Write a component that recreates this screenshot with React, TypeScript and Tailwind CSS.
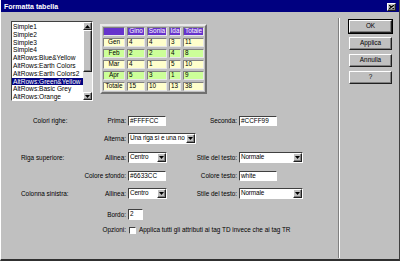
import React from 'react';

// Win95 style bevels
const raised = 'border border-t-white border-l-white border-r-[#202020] border-b-[#202020] shadow-[inset_-1px_-1px_0_#808080]';
const sunken = 'border border-t-[#404040] border-l-[#404040] border-r-white border-b-white';

const presets = [
  'Simple1',
  'Simple2',
  'Simple3',
  'Simple4',
  'AltRows:Blue&Yellow',
  'AltRows:Earth Colors',
  'AltRows:Earth Colors2',
  'AltRows:Green&Yellow',
  'AltRows:Basic Grey',
  'AltRows:Orange',
];

const rows = [
  { name: 'Gen', values: [4, 4, 3, 11], bg: 'bg-[#ffffcc]' },
  { name: 'Feb', values: [2, 2, 4, 8], bg: 'bg-[#ccff99]' },
  { name: 'Mar', values: [4, 1, 5, 10], bg: 'bg-[#ffffcc]' },
  { name: 'Apr', values: [5, 3, 1, 9], bg: 'bg-[#ccff99]' },
  { name: 'Totale', values: [15, 10, 13, 38], bg: 'bg-[#ffffcc]' },
];

const cellBorder = 'border border-t-[#808080] border-l-[#808080] border-r-[#e8e8e8] border-b-[#e8e8e8]';

const Arrow = ({ dir }: { dir: 'up' | 'down' }) => (
  <svg width="5" height="3" viewBox="0 0 5 3">
    {dir === 'up' ? <polygon points="2.5,0 5,3 0,3" fill="#000" /> : <polygon points="0,0 5,0 2.5,3" fill="#000" />}
  </svg>
);

const TextField = ({ value, width }: { value: string; width: string }) => (
  <div className={`${sunken} ${width} h-[10px] bg-white flex items-center pl-[1px] leading-none`}>{value}</div>
);

const Select = ({ value, width }: { value: string; width: string }) => (
  <div className={`${sunken} ${width} h-[11px] bg-white flex items-center leading-none`}>
    <span className="flex-1 pl-[1px] overflow-hidden whitespace-nowrap tracking-[-0.15px]">{value}</span>
    <div className={`${raised} w-[9px] h-[9px] shrink-0 bg-[#c0c0c0] flex items-center justify-center`}>
      <Arrow dir="down" />
    </div>
  </div>
);

const Button = ({ label, isDefault }: { label: string; isDefault?: boolean }) => (
  <div className={isDefault ? 'border border-black' : 'border border-transparent'}>
    <div className={`${raised} h-[13px] flex items-center justify-center leading-none`}>{label}</div>
  </div>
);

// one form row: [group label ... right label] [control] [right label] [control]
const FormRow = ({
  group,
  groupPad = 'pl-[20px]',
  label,
  control,
  label2,
  control2,
  className,
}: {
  group?: string;
  groupPad?: string;
  label: string;
  control: React.ReactNode;
  label2?: string;
  control2?: React.ReactNode;
  className: string;
}) => (
  <div className={`flex items-center ${className}`}>
    <div className={`w-[127px] flex justify-between items-center ${groupPad} pr-[2px] whitespace-nowrap`}>
      <span>{group}</span>
      <span>{label}</span>
    </div>
    <div className="w-[63px] flex">{control}</div>
    {label2 && <div className="w-[48px] text-right pr-[2px] whitespace-nowrap">{label2}</div>}
    {control2}
  </div>
);

export default function App() {
  return (
    <div className="w-[400px] h-[261px] bg-[#c0c0c0] flex flex-col font-['Liberation_Sans',Arial,sans-serif] text-[6.4px] text-black overflow-hidden border-l border-l-white border-r border-r-[#404040] border-b-2 border-b-[#303030]">
      {/* title bar */}
      <div className="h-[12px] bg-[#000080] flex items-center justify-between pl-[3px] pr-[3px] shrink-0">
        <span className="text-white font-bold text-[7px] leading-none">Formatta tabella</span>
        <div className={`${raised} w-[9px] h-[8px] bg-[#c0c0c0] flex items-center justify-center mt-[2px]`}>
          <svg width="5" height="4" viewBox="0 0 5 4">
            <path d="M0 0 L5 4 M5 0 L0 4" stroke="#000" strokeWidth="1.2" />
          </svg>
        </div>
      </div>

      <div className="flex flex-1">
        {/* left pane */}
        <div className="w-[337px] flex flex-col">
          <div className="flex items-start pt-[9px] pl-[10px]">
            {/* preset list */}
            <div className={`${sunken} w-[82px] h-[80px] bg-white flex`}>
              <div className="flex-1 flex flex-col pt-[1px] text-[6.6px]">
                {presets.map((p) => (
                  <div
                    key={p}
                    className={`h-[7.8px] leading-[7.8px] pl-[1px] whitespace-nowrap ${p === 'AltRows:Green&Yellow' ? 'bg-[#000080] text-white' : ''}`}
                  >
                    {p}
                  </div>
                ))}
              </div>
              <div className="w-[9px] flex flex-col bg-[#dcdcdc]">
                <div className={`${raised} h-[8px] bg-[#c0c0c0] flex items-center justify-center`}>
                  <Arrow dir="up" />
                </div>
                <div className={`${raised} h-[42px] bg-[#c0c0c0]`} />
                <div className="flex-1" />
                <div className={`${raised} h-[8px] bg-[#c0c0c0] flex items-center justify-center`}>
                  <Arrow dir="down" />
                </div>
              </div>
            </div>

            {/* preview table */}
            <div className="ml-[7px] mt-[3px] border-2 border-t-[#e8e8e8] border-l-[#e8e8e8] border-r-[#707070] border-b-[#707070] p-px">
              <div className="grid grid-cols-[22px_18px_20px_12px_21px] gap-x-[2px] gap-y-[2px]">
                <div className={`${cellBorder} h-[9px] bg-[#6633cc]`} />
                {['Gino', 'Sonia', 'Ida', 'Totale'].map((h) => (
                  <div key={h} className={`${cellBorder} h-[9px] bg-[#6633cc] text-white leading-none flex items-center justify-center`}>
                    {h}
                  </div>
                ))}
                {rows.map((r) => (
                  <React.Fragment key={r.name}>
                    <div className={`${cellBorder} h-[9px] ${r.bg} leading-none flex items-center justify-center`}>{r.name}</div>
                    {r.values.map((v, i) => (
                      <div key={i} className={`${cellBorder} h-[9px] ${r.bg} leading-none flex items-center pl-[1px]`}>
                        {v}
                      </div>
                    ))}
                  </React.Fragment>
                ))}
              </div>
            </div>
          </div>

          {/* form */}
          <FormRow
            className="mt-[15px] h-[10px]"
            group="Colori righe:"
            groupPad="pl-[32px]"
            label="Prima:"
            control={<TextField value="#FFFFCC" width="w-[38px]" />}
            label2="Seconda:"
            control2={<TextField value="#CCFF99" width="w-[38px]" />}
          />
          <FormRow
            className="mt-[7px] h-[11px]"
            label="Alterna:"
            control={<div className="w-[68px] shrink-0"><Select value="Una riga sì e una no" width="w-[68px]" /></div>}
          />
          <FormRow
            className="mt-[8px] h-[11px]"
            group="Riga superiore:"
            label="Allinea:"
            control={<Select value="Centro" width="w-[39px]" />}
            label2="Stile del testo:"
            control2={<Select value="Normale" width="w-[64px]" />}
          />
          <FormRow
            className="mt-[8px] h-[10px]"
            label="Colore sfondo:"
            control={<TextField value="#6633CC" width="w-[38px]" />}
            label2="Colore testo:"
            control2={<TextField value="white" width="w-[38px]" />}
          />
          <FormRow
            className="mt-[7px] h-[11px]"
            group="Colonna sinistra:"
            label="Allinea:"
            control={<Select value="Centro" width="w-[39px]" />}
            label2="Stile del testo:"
            control2={<Select value="Normale" width="w-[64px]" />}
          />
          <FormRow
            className="mt-[10px] h-[11px]"
            label="Bordo:"
            control={<TextField value="2" width="w-[15px] h-[11px]" />}
          />
          <div className="flex items-center mt-[6px] h-[8px]">
            <div className="w-[127px] text-right pr-[2px]">Opzioni:</div>
            <div className={`${sunken} w-[7px] h-[7px] bg-white ml-[1px]`} />
            <span className="ml-[3px] whitespace-nowrap">Applica tutti gli attributi ai tag TD invece che ai tag TR</span>
          </div>
        </div>

        {/* separator */}
        <div className="w-px bg-[#808080] mt-[6px] mb-[1px]" />
        <div className="w-px bg-white mt-[6px] mb-[1px]" />

        {/* buttons */}
        <div className="flex-1 flex flex-col pt-[7px] pl-[8px] pr-[6px] gap-[2px]">
          <Button label="OK" isDefault />
          <Button label="Applica" />
          <Button label="Annulla" />
          <Button label="?" />
        </div>
      </div>
    </div>
  );
}
